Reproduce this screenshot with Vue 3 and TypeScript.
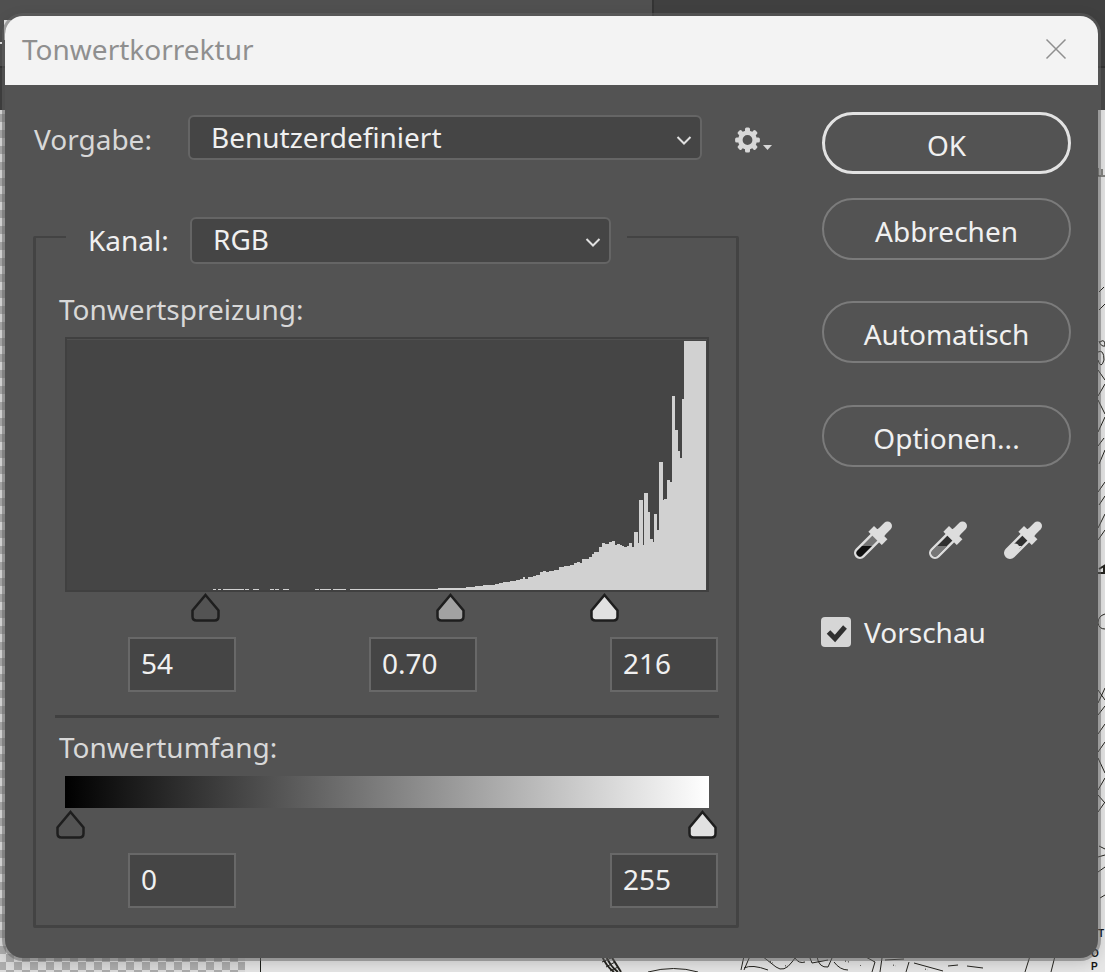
<script setup lang="ts">
import { computed, ref } from 'vue'

interface ActionButton { label: string; kind: string }
interface Pipette { label: string; glass: string; fill: string }

const preset = ref<string>('Benutzerdefiniert')
const channel = ref<string>('RGB')
const preview = ref<boolean>(true)

const inBlack = ref<number>(54)
const gammaPos = ref<number>(153.5)
const gamma = ref<string>('0.70')
const inWhite = ref<number>(216)
const outBlack = ref<number>(0)
const outWhite = ref<number>(255)

const actions: ActionButton[] = [
  { label: 'OK', kind: 'primary' },
  { label: 'Abbrechen', kind: 'cancel' },
  { label: 'Automatisch', kind: 'auto' },
  { label: 'Optionen...', kind: 'options' },
]

const pipettes: Pipette[] = [
  { label: 'Schwarzpunkt setzen', glass: '#747474', fill: '#101010' },
  { label: 'Mitteltöne setzen', glass: '#303030', fill: '#777777' },
  { label: 'Weißpunkt setzen', glass: '#303030', fill: '#dddddd' },
]

// Histogram steps: [x, height] in a 640 x 251 plot
const steps: [number, number][] = [
  [290, 1], [371, 2], [399, 3], [408, 4], [416, 5], [428, 6], [432, 7], [436, 8], [443, 9],
  [449, 10], [453, 11], [456, 13], [458, 11], [461, 13], [466, 14], [469, 15], [473, 18],
  [476, 19], [479, 18], [482, 19], [487, 20], [492, 23], [497, 24], [503, 25], [507, 27],
  [510, 28], [513, 27], [515, 31], [522, 33], [525, 36], [527, 38], [532, 43], [535, 47],
  [538, 46], [542, 48], [545, 49], [548, 45], [550, 46], [553, 45], [555, 44], [557, 43],
  [560, 44], [562, 47], [565, 43], [567, 58], [571, 47], [572, 90], [576, 45], [577, 97],
  [581, 78], [583, 51], [586, 48], [587, 76], [590, 60], [592, 128], [596, 90], [597, 91],
  [600, 110], [603, 108], [605, 194], [608, 160], [611, 139], [613, 132], [615, 191], [617, 249],
]
const histogram = computed<string>(() => {
  const parts = steps.map(([x, h]) => `H${x}V${251 - h}`)
  return `M290 251${parts.join('')}H639V251Z`
})
const specks: [number, number][] = [
  [146, 3], [151, 3], [156, 21], [178, 4], [186, 6], [203, 4], [208, 4], [216, 6],
  [248, 4], [253, 11], [266, 13], [283, 7],
]
const teeth: number[] = [0, 45, 90, 135, 180, 225, 270, 315]
</script>

<template>
  <div class="workspace">
    <svg class="canvas" viewBox="0 0 1105 972" preserveAspectRatio="xMidYMid slice" aria-hidden="true">
      <defs>
        <pattern id="checker" x="14" y="2" width="16" height="16" patternUnits="userSpaceOnUse">
          <rect width="16" height="16" fill="#dcdcdc" />
          <rect width="8" height="8" fill="#adadad" />
          <rect x="8" y="8" width="8" height="8" fill="#adadad" />
        </pattern>
      </defs>
      <rect width="1105" height="110" fill="#404040" />
      <rect width="652" height="66" fill="#505050" />
      <rect x="652" width="2" height="20" fill="#343434" />
      <rect y="66" width="1105" height="2" fill="#343434" />
      <rect x="1080" y="68" width="25" height="42" fill="#494949" />
      <path d="M4 20H12V40H4ZM0 42H2V44H0Z" fill="#e4e4e4" />
      <rect y="110" width="1105" height="862" fill="#e6e6e6" />
      <rect y="110" width="245" height="862" fill="url(#checker)" />
      <rect x="260" y="110" width="1" height="862" fill="#1c1f1a" />
      <g fill="none" stroke="#25241f" stroke-width="1">
        <path d="M602 956Q606 966 614 972M606 956Q610 966 618 972M611 956L621 972" stroke-width="2" />
        <path d="M602 962L611 958M606 967L615 962M610 971L618 967" stroke-width="1" />
        <path d="M648 972Q674 965 698 972M744 956L741 970M750 956L744 970M744 968Q752 964 768 970M762 956L776 967Q784 973 792 962L795 958Q799 964 805 962M810 958L812 963L828 960M817 957Q819 968 828 967L832 958M834 962Q840 970 848 970M864 956L875 962L872 972M882 958L880 972M885 960L904 959M909 962L906 972M914 963L943 971M948 966L958 965M967 966L983 968M1030 956L1025 972M1055 956L1051 972" />
        <path d="M770 961L773 963M785 966L788 965M845 961L849 962M860 965L862 967M893 965L896 966M925 969L928 970" stroke-dasharray="1 2" />
        <path d="M1096 176H1105M1098 168V176M1102 169V175M1099 292L1104 287M1099 310L1105 304M1100 342Q1105 338 1105 346Q1101 347 1099 341M1098 352Q1104 349 1104 360Q1101 370 1098 360M1098 370L1105 380M1105 384L1098 396M1098 400L1105 414M1105 417L1098 432M1098 446L1104 438M1099 464L1105 450M1098 492L1105 482M1099 505L1105 496M1098 528L1105 514M1098 540L1105 530" />
        <path d="M1105 614Q1098 616 1098 623Q1099 629 1105 629M1098 690L1105 700M1105 688L1098 703M1098 715L1105 706M1098 734L1105 724M1105 742L1098 752M1098 758L1105 773M1105 778L1098 790M1098 795L1105 803M1098 812L1105 802M1099 846L1105 849M1098 857L1105 855M1098 872L1105 867M1100 898L1105 895" />
        <path d="M1099 569L1104 566V574M1098 573H1105" stroke-width="2" />
      </g>
      <g class="lettering">
        <text x="1098" y="937">T</text>
        <text x="1091" y="957">O</text>
        <text x="1091" y="970">P</text>
      </g>
    </svg>

    <main class="dialog" role="dialog" aria-labelledby="dialog-title">
      <header class="titlebar">
        <h1 id="dialog-title">Tonwertkorrektur</h1>
        <button class="close" type="button" aria-label="Schließen">
          <svg width="22" height="22" viewBox="0 0 22 22"><path d="M1.5 1.5L20.500 20.500M20.500 1.500L1.500 20.500" /></svg>
        </button>
      </header>

      <div class="body">
        <section class="settings">
          <div class="preset">
            <label for="preset">Vorgabe:</label>
            <div class="dropdown">
              <select id="preset" v-model="preset"><option>Benutzerdefiniert</option></select>
              <svg class="chevron" width="16" height="11" viewBox="0 0 16 11"><path d="M1.500 2L8 8.500L14.500 2" /></svg>
            </div>
            <button class="gear" type="button" aria-label="Vorgabenoptionen">
              <svg width="38" height="26" viewBox="0 0 38 26">
                <circle cx="12.500" cy="13" r="7.200" fill="none" stroke="#d8d8d8" stroke-width="4.600" />
                <rect v-for="a in teeth" :key="a" x="10" y="0.600" width="5" height="5" rx="1.500" fill="#d8d8d8" :transform="`rotate(${a} 12.5 13)`" />
                <path d="M28 18H37L32.500 23Z" fill="#d8d8d8" />
              </svg>
            </button>
          </div>

          <fieldset class="levels">
            <legend>
              <label for="channel">Kanal:</label>
              <span class="dropdown">
                <select id="channel" v-model="channel"><option>RGB</option></select>
                <svg class="chevron" width="16" height="11" viewBox="0 0 16 11"><path d="M1.500 2L8 8.500L14.500 2" /></svg>
              </span>
            </legend>

            <h2>Tonwertspreizung:</h2>
            <div class="plot">
              <svg viewBox="0 0 640 251" preserveAspectRatio="none" role="img" aria-label="Histogramm">
                <rect width="640" height="1" fill="#505050" />
                <rect v-for="s in specks" :key="s[0]" :x="s[0]" y="250" :width="s[1]" height="1" fill="#d1d1d1" />
                <path :d="histogram" fill="#d1d1d1" shape-rendering="crispEdges" />
              </svg>
            </div>
            <div class="sliders input-sliders">
              <input v-model.number="inBlack" class="black" type="range" min="0" max="255" aria-label="Tiefen">
              <input v-model.number="gammaPos" class="mid" type="range" min="0" max="255" step="0.5" aria-label="Mitteltöne">
              <input v-model.number="inWhite" class="white" type="range" min="0" max="255" aria-label="Lichter">
            </div>
            <div class="values">
              <input v-model="inBlack" type="text" aria-label="Tiefenwert">
              <input v-model="gamma" type="text" aria-label="Gammawert">
              <input v-model="inWhite" type="text" aria-label="Lichterwert">
            </div>

            <hr>

            <h2>Tonwertumfang:</h2>
            <div class="ramp"></div>
            <div class="sliders output-sliders">
              <input v-model.number="outBlack" class="black" type="range" min="0" max="255" aria-label="Ausgabe Tiefen">
              <input v-model.number="outWhite" class="white" type="range" min="0" max="255" aria-label="Ausgabe Lichter">
            </div>
            <div class="values">
              <input v-model="outBlack" type="text" aria-label="Ausgabe Tiefenwert">
              <input v-model="outWhite" type="text" aria-label="Ausgabe Lichterwert">
            </div>
          </fieldset>
        </section>

        <aside class="actions">
          <button v-for="a in actions" :key="a.kind" type="button" class="pill" :class="a.kind">{{ a.label }}</button>
          <div class="pipettes">
            <button v-for="(p, i) in pipettes" :key="p.label" type="button" :aria-label="p.label">
              <svg width="41" height="41" viewBox="0 0 41 41" fill="none">
                <clipPath :id="`fluid-${i}`"><path d="M0 26H41V41H0Z" /></clipPath>
                <path d="M24 16L7 33" stroke="#dddddd" stroke-width="12" stroke-linecap="round" />
                <path d="M24 16L7 33" :stroke="p.glass" stroke-width="7" stroke-linecap="round" />
                <path d="M24 16L7 33" :stroke="p.fill" stroke-width="7" stroke-linecap="round" :clip-path="`url(#fluid-${i})`" />
                <path v-if="p.fill === '#dddddd'" d="M12 28L7 33" stroke="#dddddd" stroke-width="9" stroke-linecap="round" />
                <path d="M18.200 8.800L31.600 22.200" stroke="#dddddd" stroke-width="8" />
                <path d="M20 11L29 20L33 13L27 8Z" fill="#dddddd" />
                <path d="M26 14.500L34.500 6" stroke="#dddddd" stroke-width="9" stroke-linecap="round" />
              </svg>
            </button>
          </div>
          <label class="preview">
            <span class="tick">
              <input v-model="preview" type="checkbox">
              <svg v-if="preview" width="30" height="30" viewBox="0 0 30 30"><path d="M7.500 15L14 21.500L24 10" /></svg>
            </span>
            Vorschau
          </label>
        </aside>
      </div>
    </main>
  </div>
</template>

<style>
body { background: #e6e6e6; }
</style>

<style scoped>
.workspace {
  position: relative;
  box-sizing: border-box;
  min-height: 100vh;
  padding: 16px 7px 14px 5px;
  overflow: hidden;
  font: 28px/40px "Noto Sans", "Open Sans", sans-serif;
  color: #f0f0f0;
}
.workspace *, .workspace *::before { box-sizing: border-box; }
button, input, select { font: inherit; color: inherit; margin: 0; }
button { padding: 0; background: none; border: 0; }
svg { display: block; }
.canvas { position: absolute; inset: 0; width: 100%; height: 100%; }
.lettering { font: bold 10px "Liberation Sans", sans-serif; fill: #161616; }

.dialog {
  position: relative;
  overflow: hidden;
  border-radius: 18px;
  background: #535353;
  box-shadow: 0 0 0 3px rgba(100, 100, 100, 0.5), 0 4px 16px rgba(0, 0, 0, 0.2);
}
.titlebar {
  display: flex;
  align-items: center;
  justify-content: space-between;
  height: 69px;
  padding: 0 31px 3px 17px;
  background: #f3f3f3;
}
h1, h2 { margin: 0; font: inherit; }
h1 { color: #8f8f8f; }
.close path { stroke: #8f8f8f; stroke-width: 1.5; fill: none; }

.body { display: flex; gap: 34px; padding: 27px 27px 30px 28px; }
.settings { flex: 1; min-width: 0; }
.preset { display: flex; align-items: center; padding-top: 3px; color: #d8d8d8; }
.preset > label { width: 155px; padding: 2px 0 0 1px; }
.dropdown { position: relative; flex: 1; height: 45px; color: #f0f0f0; }
.dropdown select {
  display: block;
  width: 100%;
  height: 100%;
  padding: 0 40px 3px 21px;
  appearance: none;
  border: 2px solid #656565;
  border-radius: 6px;
  background: #454545;
}
.chevron { position: absolute; right: 10px; top: 20px; pointer-events: none; }
.chevron path { fill: none; stroke: #e0e0e0; stroke-width: 2; }
.gear { width: 53px; margin: 4px 0 0 33px; }

.levels {
  min-width: 0;
  margin: 57px 49px 0 0;
  padding: 0 0 17px;
  border: 3px solid #434343;
  border-top-width: 2px;
  border-radius: 2px;
}
legend {
  display: flex;
  align-items: flex-start;
  width: 561px;
  height: 40px;
  margin-left: 30px;
  padding: 0 16px 0 22px;
}
legend > label { width: 102px; line-height: 46px; }
legend .dropdown { height: 47px; }
h2 { padding-left: 23px; color: #d8d8d8; }
.levels > h2:first-of-type { margin-top: 32px; }
.plot {
  height: 255px;
  margin: 8px 27px 0 29px;
  border: 2px solid #404040;
  background: #454545;
}
.plot svg { width: 100%; height: 100%; }
.sliders { position: relative; height: 29px; margin-top: 1px; }
.input-sliders { margin-left: 22px; margin-right: 21px; }
.output-sliders { margin: 2px 19px 0 20px; }
.sliders input {
  position: absolute;
  inset: 0;
  width: 100%;
  height: 29px;
  appearance: none;
  background: none;
  pointer-events: none;
}
.sliders input::-webkit-slider-thumb {
  appearance: none;
  width: 29px;
  height: 29px;
  border: 0;
  pointer-events: auto;
}
.sliders .black::-webkit-slider-thumb {
  background: url("data:image/svg+xml,%3Csvg xmlns='http://www.w3.org/2000/svg' width='29' height='29'%3E%3Cpath d='M14.5 2L27.500 17.500V23.500Q27.500 27.500 23.500 27.500H5.500Q1.500 27.500 1.500 23.500V17.500Z' fill='%23535353' stroke='%231e1e1e' stroke-width='2.5'/%3E%3C/svg%3E") no-repeat;
}
.sliders .mid::-webkit-slider-thumb {
  background: url("data:image/svg+xml,%3Csvg xmlns='http://www.w3.org/2000/svg' width='29' height='29'%3E%3Cpath d='M14.5 2L27.500 17.500V23.500Q27.500 27.500 23.500 27.500H5.500Q1.500 27.500 1.500 23.500V17.500Z' fill='%23a2a2a2' stroke='%231e1e1e' stroke-width='2.5'/%3E%3C/svg%3E") no-repeat;
}
.sliders .white::-webkit-slider-thumb {
  background: url("data:image/svg+xml,%3Csvg xmlns='http://www.w3.org/2000/svg' width='29' height='29'%3E%3Cpath d='M14.5 2L27.500 17.500V23.500Q27.500 27.500 23.500 27.500H5.500Q1.500 27.500 1.500 23.500V17.500Z' fill='%23e1e1e1' stroke='%231e1e1e' stroke-width='2.5'/%3E%3C/svg%3E") no-repeat;
}
.values { display: flex; justify-content: space-between; margin: 15px 18px 0 92px; }
.values input {
  width: 108px;
  height: 55px;
  padding: 0 11px 4px;
  border: 2px solid #686868;
  background: #454545;
}
.output-sliders + .values { margin-top: 14px; }
hr { height: 3px; margin: 23px 17px 9px 19px; border: 0; background: #404040; }
.ramp { height: 32px; margin: 9px 27px 0 29px; background: linear-gradient(to right, #000, #fff); }

.actions { display: flex; flex-direction: column; width: 249px; }
.pill {
  height: 62px;
  padding-top: 3px;
  border: 2px solid #7b7b7b;
  border-radius: 31px;
}
.pill.primary { border: 3px solid #e2e2e2; }
.cancel { margin-top: 24px; }
.auto { margin-top: 41px; }
.options { margin-top: 42px; }
.pipettes { display: flex; gap: 34px; margin: 53px 0 0 31px; }
.preview { display: flex; align-items: center; gap: 13px; margin-top: 51px; margin-left: -1px; }
.tick { position: relative; width: 30px; height: 30px; }
.tick input {
  display: block;
  width: 30px;
  height: 30px;
  appearance: none;
  border-radius: 4px;
  background: #d6d6d6;
}
.tick svg { position: absolute; inset: 0; pointer-events: none; }
.tick path { fill: none; stroke: #303030; stroke-width: 5; }
</style>
